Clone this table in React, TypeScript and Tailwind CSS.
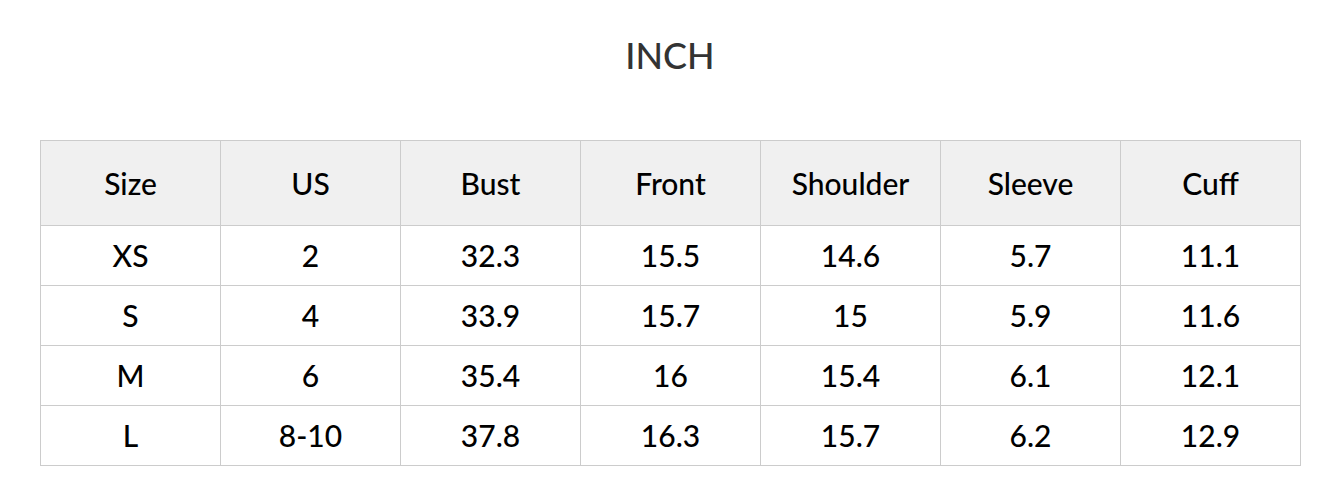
const headers = ["Size", "US", "Bust", "Front", "Shoulder", "Sleeve", "Cuff"];

const rows = [
  ["XS", "2", "32.3", "15.5", "14.6", "5.7", "11.1"],
  ["S", "4", "33.9", "15.7", "15", "5.9", "11.6"],
  ["M", "6", "35.4", "16", "15.4", "6.1", "12.1"],
  ["L", "8-10", "37.8", "16.3", "15.7", "6.2", "12.9"],
];

export default function App() {
  return (
    <div className="w-[1340px] h-[480px] bg-white font-['Lato','Noto_Sans',sans-serif]">
      <h2 className="pt-[32px] h-[140px] text-center text-[36px] leading-[46px] text-[#333] font-medium">INCH</h2>
      <table className="ml-[40px] border-collapse table-fixed w-[1261px] text-[30px] text-black">
        <thead>
          <tr className="bg-[#f0f0f0] h-[85px]">
            {headers.map((h) => (
              <th key={h} className="w-[180px] border border-[#cccccc] font-medium">{h}</th>
            ))}
          </tr>
        </thead>
        <tbody>
          {rows.map((r) => (
            <tr key={r[0]} className="h-[60px]">
              {r.map((c, i) => (
                <td key={i} className="border border-[#cccccc] text-center font-medium">{c}</td>
              ))}
            </tr>
          ))}
        </tbody>
      </table>
    </div>
  );
}
